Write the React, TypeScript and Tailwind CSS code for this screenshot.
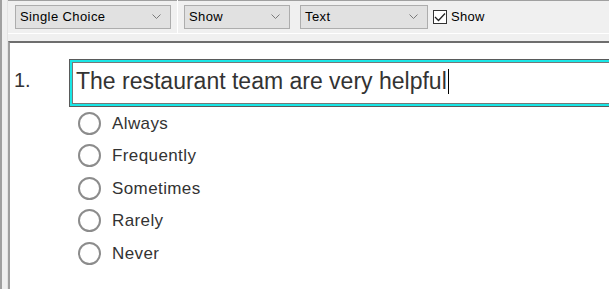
import React from 'react';

const options = ['Always', 'Frequently', 'Sometimes', 'Rarely', 'Never'];

const Chevron = () => (
  <svg width="9" height="6" viewBox="0 0 9 6" className="shrink-0">
    <path d="M0.5 0.5 L4.5 4.5 L8.5 0.5" fill="none" stroke="#7a7a7a" strokeWidth="1" />
  </svg>
);

const Select: React.FC<{ label: string; width: string }> = ({ label, width }) => (
  <div
    className={`${width} h-[24px] flex items-center justify-between pl-[4px] pr-[9px] bg-[#e1e1e1] border border-[#adadad] text-[13px] tracking-[0.4px] text-black`}
  >
    <span>{label}</span>
    <Chevron />
  </div>
);

const App: React.FC = () => {
  return (
    <div
      className="w-[609px] h-[289px] overflow-hidden flex bg-[#f0f0f0]"
      style={{ fontFamily: '"Liberation Sans", Arial, sans-serif' }}
    >
      <div className="w-[2px] bg-[#a0a0a0]" />
      <div className="w-[5px] bg-[#f0f0f0]" />
      <div className="flex-1 min-w-0 flex flex-col border-l border-[#e3e3e3]">
        {/* toolbar */}
        <div className="h-[34px] flex items-center pl-[7px] border-t border-[#a0a0a0] border-b border-b-white">
          <Select label="Single Choice" width="w-[156px]" />
          <div className="w-[1px] h-[34px] bg-[#a0a0a0] ml-[6px] mr-[6px] border-r border-white" />
          <Select label="Show" width="w-[106px]" />
          <div className="w-[10px]" />
          <Select label="Text" width="w-[128px]" />
          <label className="flex items-center ml-[5px] gap-[4px] text-[13px] tracking-[0.3px] text-black">
            <span className="w-[14px] h-[14px] border border-[#333] bg-white flex items-center justify-center">
              <svg width="12" height="10" viewBox="0 0 12 10">
                <path d="M1 5 L4.5 8.5 L11 1.5" fill="none" stroke="#222" strokeWidth="1.3" />
              </svg>
            </span>
            Show
          </label>
        </div>
        <div className="h-[7px]" />
        {/* content */}
        <div className="flex-1 bg-white border-t-2 border-l-2 border-[#6e6e6e] border-l-[#a0a0a0] overflow-hidden">
          <div className="flex items-start pt-[16px]">
            <div className="w-[59px] shrink-0 pl-[4px] pt-[11px] text-[20px] text-[#333] leading-none">1.</div>
            <div className="w-[560px] shrink-0 h-[48px] border border-[#5a5a5a] bg-[#19e6e6] p-[2px]">
              <div className="h-full bg-white border border-[#777] flex items-center pl-[3px] pb-[4px]">
                <span className="text-[23px] text-[#333]">The restaurant team are very helpful</span>
                <span className="w-[1px] h-[25px] bg-black ml-[1px]" />
              </div>
            </div>
          </div>
          <div className="flex flex-col pl-[68px]">
            {options.map((o) => (
              <div key={o} className="h-[32.5px] flex items-center gap-[11px]">
                <span className="w-[23px] h-[23px] rounded-full border-2 border-[#8c8c8c] bg-white" />
                <span className="text-[17px] text-[#333] tracking-[0.4px]">{o}</span>
              </div>
            ))}
          </div>
        </div>
      </div>
    </div>
  );
};

export default App;
